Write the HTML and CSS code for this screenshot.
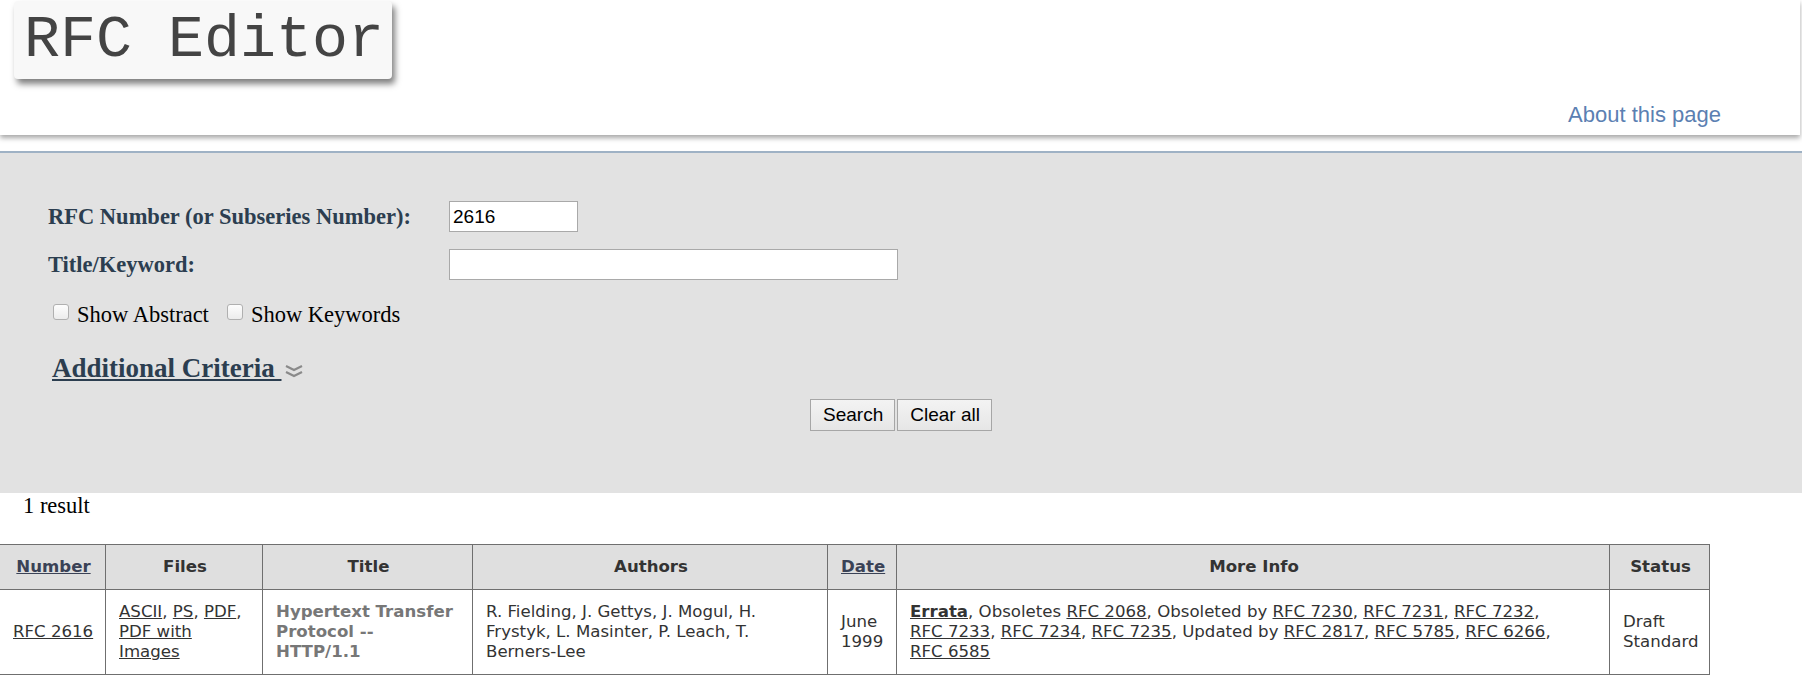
FILE: index.html
```html
<!DOCTYPE html>
<html>
<head>
<meta charset="utf-8">
<title>RFC Editor</title>
<link rel="stylesheet" href="styles.css">
</head>
<body>
<header class="topbar">
  <div class="logo">RFC Editor</div>
  <a class="about" href="#">About this page</a>
</header>
<div class="rule"></div>
<section class="search">
  <div class="fields">
    <label class="lbl" for="num">RFC Number (or Subseries Number):</label>
    <input id="num" class="inp inp-num" type="text" value="2616">
    <label class="lbl" for="kw">Title/Keyword:</label>
    <input id="kw" class="inp inp-kw" type="text">
  </div>
  <div class="checks">
    <label class="chk"><input type="checkbox" class="box">Show Abstract</label>
    <label class="chk"><input type="checkbox" class="box">Show Keywords</label>
  </div>
  <div class="more">
    <a class="more-link" href="#">Additional Criteria </a><svg class="chev" width="20" height="14" viewBox="0 0 20 14"><path d="M2 2 L10 6 L18 2 M2 8 L10 12 L18 8" fill="none" stroke="#8a8a8a" stroke-width="2.2"/></svg>
  </div>
  <div class="buttons">
    <button class="btn" type="button">Search</button><button class="btn" type="button">Clear all</button>
  </div>
</section>
<p class="count">1 result</p>
<table class="results">
  <thead>
    <tr>
      <th class="c-num"><a href="#">Number</a></th>
      <th class="c-files">Files</th>
      <th class="c-title">Title</th>
      <th class="c-auth">Authors</th>
      <th class="c-date"><a href="#">Date</a></th>
      <th class="c-info">More Info</th>
      <th class="c-stat">Status</th>
    </tr>
  </thead>
  <tbody>
    <tr>
      <td><a href="#">RFC&nbsp;2616</a></td>
      <td><a href="#">ASCII</a>, <a href="#">PS</a>, <a href="#">PDF</a>, <a href="#">PDF with Images</a></td>
      <td class="title">Hypertext Transfer Protocol -- HTTP/1.1</td>
      <td>R. Fielding, J. Gettys, J. Mogul, H. Frystyk, L. Masinter, P. Leach, T. Berners-Lee</td>
      <td>June 1999</td>
      <td><a href="#" class="errata">Errata</a>, Obsoletes <a href="#">RFC&nbsp;2068</a>, Obsoleted by <a href="#">RFC&nbsp;7230</a>, <a href="#">RFC&nbsp;7231</a>, <a href="#">RFC&nbsp;7232</a>, <a href="#">RFC&nbsp;7233</a>, <a href="#">RFC&nbsp;7234</a>, <a href="#">RFC&nbsp;7235</a>, Updated by <a href="#">RFC&nbsp;2817</a>, <a href="#">RFC&nbsp;5785</a>, <a href="#">RFC&nbsp;6266</a>, <a href="#">RFC&nbsp;6585</a></td>
      <td>Draft Standard</td>
    </tr>
  </tbody>
</table>
</body>
</html>
```
FILE: styles.css
```css
html, body {
  margin: 0;
  padding: 0;
  background: #fff;
  font-family: "Liberation Serif", "Times New Roman", serif;
  font-size: 22.5px;
  color: #000;
}

.topbar {
  width: 1800px;
  height: 135px;
  background: #fff;
  box-shadow: 0 3px 5px rgba(0, 0, 0, 0.35);
  display: flex;
  justify-content: space-between;
  align-items: flex-start;
  box-sizing: border-box;
  padding-right: 79px;
  margin-bottom: 16px;
}

.logo {
  margin: 1px 0 0 14px;
  width: 378px;
  height: 78px;
  box-sizing: border-box;
  padding-left: 10px;
  background: #f8f8f8;
  border-radius: 4px;
  box-shadow: 3px 5px 6px rgba(0, 0, 0, 0.5);
  font-family: "Liberation Mono", "Courier New", monospace;
  font-size: 60px;
  line-height: 78px;
  color: #444;
  white-space: nowrap;
}

.about {
  align-self: flex-end;
  margin-bottom: 8px;
  font-family: "Liberation Sans", Arial, sans-serif;
  font-size: 22px;
  line-height: 25px;
  color: #5b80b2;
  text-decoration: none;
}

.rule {
  height: 2px;
  background: #9fb2c5;
}

.search {
  background: #e2e2e2;
  height: 340px;
  box-sizing: border-box;
  padding-top: 48px;
}

.fields {
  display: grid;
  grid-template-columns: 401px auto;
  row-gap: 17px;
  padding-left: 48px;
  align-items: center;
  justify-items: start;
}

.lbl {
  font-weight: bold;
  font-size: 22.5px;
  color: #2c3e50;
}

.inp {
  box-sizing: border-box;
  height: 31px;
  border: 1px solid #a9a9a9;
  background: #fff;
  margin: 0;
  padding: 0 3px;
  font-family: "Liberation Sans", Arial, sans-serif;
  font-size: 19px;
  color: #000;
  outline: none;
}

.inp-num { width: 129px; }
.inp-kw { width: 449px; }

.checks {
  display: flex;
  padding-left: 53px;
  margin-top: 22px;
  line-height: 25px;
}

.chk {
  display: flex;
  align-items: flex-start;
  margin-right: 18px;
}

.box {
  appearance: none;
  -webkit-appearance: none;
  width: 16px;
  height: 16px;
  margin: 2px 8px 0 0;
  box-sizing: border-box;
  border: 1px solid #b0b0b0;
  border-radius: 3px;
  background: linear-gradient(#fdfdfd, #ececec);
}

.more {
  display: flex;
  align-items: center;
  padding-left: 52px;
  margin-top: 26px;
  height: 31px;
}

.more-link {
  font-size: 27px;
  font-weight: bold;
  color: #2c3e50;
  text-decoration: underline;
  white-space: pre;
  line-height: 31px;
}

.chev {
  margin: 4px 0 0 2px;
}

.buttons {
  display: flex;
  justify-content: center;
  gap: 2px;
  margin-top: 15px;
}

.btn {
  height: 32px;
  box-sizing: border-box;
  border: 1px solid #a6a6a6;
  border-radius: 0;
  background: linear-gradient(#f3f3f3, #e6e6e6);
  font-family: "Liberation Sans", Arial, sans-serif;
  font-size: 19px;
  color: #000;
  padding: 0 11px 0 12px;
  margin: 0;
}

.count {
  margin: 0;
  padding: 0 0 0 23px;
  line-height: 25px;
  height: 51px;
  box-sizing: border-box;
}

.results {
  border-collapse: collapse;
  table-layout: fixed;
  width: 1710px;
  margin-left: -1px;
  font-family: "DejaVu Sans", Verdana, sans-serif;
  font-size: 16.6px;
  line-height: 20px;
  color: #333;
}

.results th,
.results td {
  box-sizing: border-box;
  border: 1px solid #6f6f6f;
  padding: 12px 11px 12px 13px;
  vertical-align: middle;
}

.results th {
  background: #dfdfdf;
  font-weight: bold;
  text-align: center;
  color: #333;
}

.results td {
  text-align: left;
}

.results a {
  color: #333;
  text-decoration: underline;
}

.results th a {
  color: #3a4256;
}

.c-num { width: 106px; }
.c-files { width: 157px; }
.c-title { width: 210px; }
.c-auth { width: 355px; }
.c-date { width: 69px; }
.c-info { width: 713px; }
.c-stat { width: 100px; }

.results td.title {
  font-weight: bold;
  color: #777;
  padding-right: 14px;
}

.errata {
  font-weight: bold;
}
```
